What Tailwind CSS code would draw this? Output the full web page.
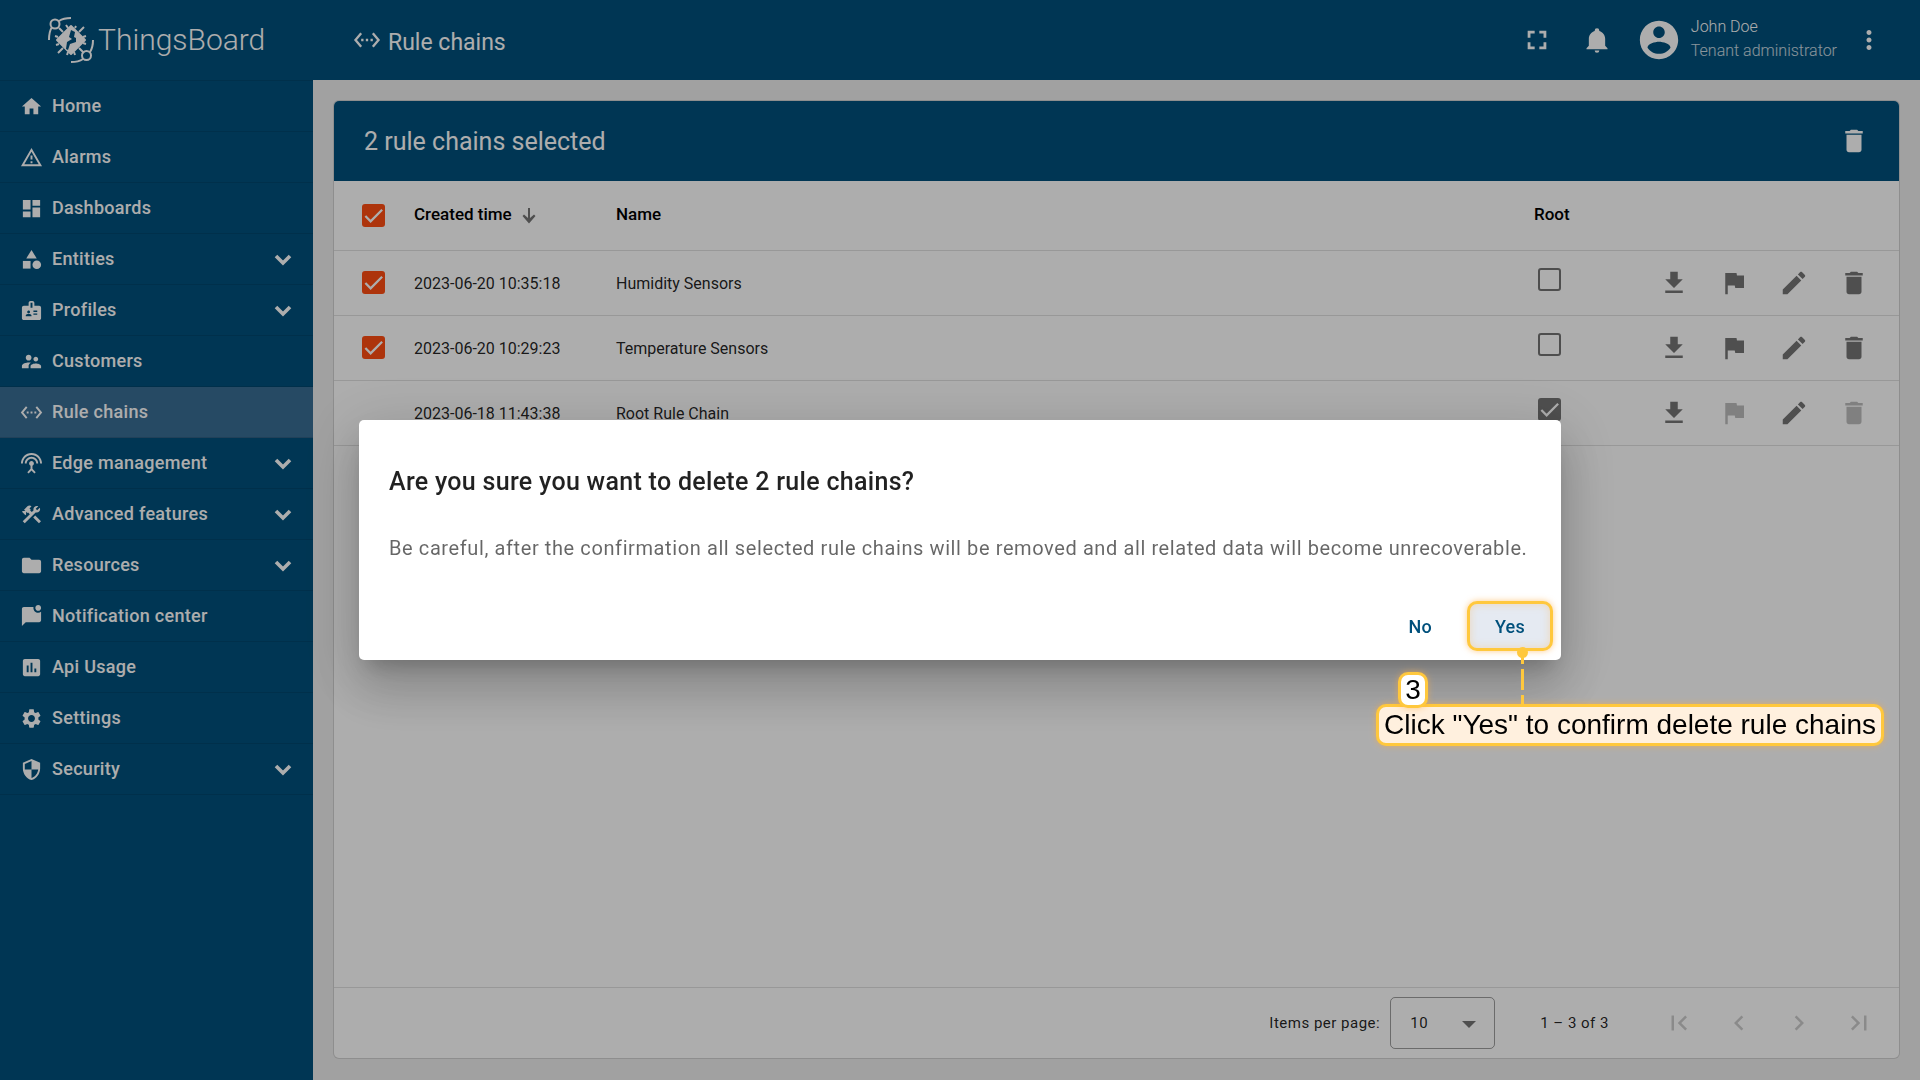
<!DOCTYPE html>
<html lang="en">
<head>
  <meta charset="UTF-8"/>
  <meta name="viewport" content="width=device-width, initial-scale=1.0"/>
  <title>Rule chains - ThingsBoard</title>
  <script src="https://cdn.jsdelivr.net/npm/@tailwindcss/browser@4"></script>
</head>
<body class="font-['Roboto',sans-serif] bg-[#eeeeee] text-black/87">

<!-- icon set -->
<svg class="hidden">
  <symbol id="home" viewBox="0 0 24 24"><path d="M10 20v-6h4v6h5v-8h3L12 3 2 12h3v8z"/></symbol>
  <symbol id="alarm" viewBox="0 0 24 24"><path d="M12 5.99L19.53 19H4.47L12 5.99M12 2L1 21h22L12 2zm1 14h-2v2h2v-2zm0-6h-2v4h2v-4z"/></symbol>
  <symbol id="dashboard" viewBox="0 0 24 24"><path d="M3 13h8V3H3v10zm0 8h8v-6H3v6zm10 0h8V11h-8v10zm0-18v6h8V3h-8z"/></symbol>
  <symbol id="category" viewBox="0 0 24 24"><path d="M12 2l-5.5 9h11z"/><circle cx="17.5" cy="17.5" r="4.5"/><path d="M3 13.5h8v8H3z"/></symbol>
  <symbol id="badge" viewBox="0 0 24 24"><path fill-rule="evenodd" d="M20 7h-5V4c0-1.100-.9-2-2-2h-2c-1.100 0-2 .9-2 2v3H4c-1.100 0-2 .9-2 2v11c0 1.100.9 2 2 2h16c1.100 0 2-.9 2-2V9c0-1.100-.9-2-2-2zM9 12c.83 0 1.500.67 1.500 1.500S9.830 15 9 15s-1.500-.67-1.500-1.500S8.170 12 9 12zm3 6H6v-.75c0-1 2-1.500 3-1.500s3 .5 3 1.500V18zm1-9h-2V4h2v5zm5 7.500h-4V15h4v1.500zm0-3h-4V12h4v1.500z"/></symbol>
  <symbol id="people" viewBox="0 0 24 24"><path d="M16.500 12c1.380 0 2.490-1.120 2.490-2.500S17.880 7 16.500 7C15.120 7 14 8.120 14 9.500s1.120 2.500 2.500 2.500zM9 11c1.660 0 2.990-1.340 2.990-3S10.660 5 9 5C7.340 5 6 6.340 6 8s1.340 3 3 3zm7.500 3c-1.830 0-5.500.92-5.500 2.750V19h11v-2.250c0-1.830-3.670-2.750-5.500-2.750zM9 13c-2.330 0-7 1.170-7 3.500V19h7v-2.250c0-.85.33-2.340 2.370-3.470C10.500 13.100 9.660 13 9 13z"/></symbol>
  <symbol id="ethernet" viewBox="0 0 24 24"><path d="M7.770 6.760L6.230 5.480.82 12l5.410 6.520 1.540-1.280L3.420 12l4.350-5.240zM7 13h2v-2H7v2zm10-2h-2v2h2v-2zm-6 2h2v-2h-2v2zm6.770-7.520l-1.540 1.280L20.580 12l-4.350 5.240 1.540 1.280L23.180 12l-5.410-6.520z"/></symbol>
  <symbol id="antenna" viewBox="0 0 24 24"><path d="M12 5c-3.870 0-7 3.130-7 7h2c0-2.760 2.240-5 5-5s5 2.240 5 5h2c0-3.870-3.130-7-7-7zm1 9.290c.88-.39 1.500-1.260 1.500-2.290 0-1.380-1.120-2.500-2.500-2.500S9.500 10.620 9.500 12c0 1.020.62 1.900 1.500 2.290v3.300L7.590 21 9 22.410l3-3 3 3L16.410 21 13 17.590v-3.300zM12 1C5.930 1 1 5.930 1 12h2c0-4.970 4.030-9 9-9s9 4.030 9 9h2c0-6.070-4.930-11-11-11z"/></symbol>
  <symbol id="tools" viewBox="0 0 24 24"><path d="M13.783 15.172l2.121-2.121 5.996 5.996-2.121 2.121zM17.500 10c1.930 0 3.500-1.570 3.500-3.500 0-.58-.16-1.120-.41-1.600l-2.700 2.700-1.490-1.490 2.700-2.700c-.48-.25-1.020-.41-1.600-.41C15.570 3 14 4.570 14 6.500c0 .41.08.8.21 1.160l-1.850 1.850-1.780-1.780.71-.71-1.410-1.410L12 3.490c-1.170-1.170-3.070-1.170-4.240 0L4.220 7.030l1.410 1.410H2.810l-.71.71 3.540 3.540.71-.71V9.150l1.410 1.410.71-.71 1.780 1.780-7.410 7.410 2.120 2.120L16.340 9.790c.36.13.75.21 1.160.21z"/></symbol>
  <symbol id="folder" viewBox="0 0 24 24"><path d="M10 4H4c-1.100 0-1.990.9-1.990 2L2 18c0 1.100.9 2 2 2h16c1.100 0 2-.9 2-2V8c0-1.100-.9-2-2-2h-8l-2-2z"/></symbol>
  <symbol id="unread" viewBox="0 0 24 24"><path d="M22 6.980V16c0 1.100-.9 2-2 2H6l-4 4V4c0-1.100.9-2 2-2h10.100c-.06.32-.1.660-.1 1 0 2.760 2.240 5 5 5 1.130 0 2.160-.39 3-1.020zM16 3c0 1.660 1.340 3 3 3s3-1.340 3-3-1.340-3-3-3-3 1.340-3 3z"/></symbol>
  <symbol id="chart" viewBox="0 0 24 24"><path d="M19 3H5c-1.100 0-2 .9-2 2v14c0 1.100.9 2 2 2h14c1.100 0 2-.9 2-2V5c0-1.100-.9-2-2-2zM9 17H7v-7h2v7zm4 0h-2V7h2v10zm4 0h-2v-4h2v4z"/></symbol>
  <symbol id="gear" viewBox="0 0 24 24"><path d="M19.140 12.940c.04-.3.060-.61.060-.94 0-.32-.02-.64-.07-.94l2.030-1.580c.18-.14.230-.41.120-.61l-1.920-3.320c-.12-.22-.37-.29-.59-.22l-2.390.96c-.5-.38-1.030-.7-1.620-.94l-.36-2.540c-.04-.24-.24-.41-.48-.41h-3.840c-.24 0-.43.17-.47.41l-.36 2.540c-.59.24-1.130.57-1.620.94l-2.390-.96c-.22-.08-.47 0-.59.22L2.740 8.870c-.12.21-.08.47.12.61l2.030 1.580c-.05.3-.09.63-.09.94s.02.640.07.94l-2.030 1.580c-.18.14-.23.41-.12.61l1.920 3.320c.12.22.37.29.59.22l2.390-.96c.5.38 1.030.7 1.620.94l.36 2.540c.05.24.24.41.48.41h3.840c.24 0 .44-.17.470-.41l.36-2.540c.59-.24 1.130-.56 1.620-.94l2.390.96c.22.08.47 0 .59-.22l1.920-3.320c.12-.22.070-.47-.12-.61l-2.010-1.580zM12 15.600c-1.980 0-3.600-1.620-3.600-3.600s1.620-3.600 3.600-3.600 3.600 1.620 3.600 3.600-1.620 3.600-3.600 3.600z"/></symbol>
  <symbol id="shield" viewBox="0 0 24 24"><path d="M12 1L3 5v6c0 5.550 3.840 10.740 9 12 5.160-1.260 9-6.450 9-12V5l-9-4zm0 10.990h7c-.53 4.120-3.280 7.790-7 8.940V12H5V6.300l7-3.110v8.800z"/></symbol>
  <symbol id="chevron" viewBox="0 0 24 24"><path d="M5 9l7 7 7-7" fill="none" stroke="currentColor" stroke-width="3.600"/></symbol>
  <symbol id="fullscreen" viewBox="0 0 24 24"><path d="M4 4h6v2.400H6.400V10H4V4m10 0h6v6h-2.400V6.400H14V4m3.600 10H20v6h-6v-2.400h3.600V14M10 17.600V20H4v-6h2.400v3.600H10z"/></symbol>
  <symbol id="bell" viewBox="0 0 24 24"><path d="M21 19v1H3v-1l2-2v-6c0-3.100 2.030-5.830 5-6.710V4a2 2 0 0 1 4 0v.29c2.970.88 5 3.610 5 6.710v6l2 2m-7 2a2 2 0 0 1-4 0"/></symbol>
  <symbol id="account" viewBox="0 0 24 24"><path d="M12 2C6.480 2 2 6.480 2 12s4.480 10 10 10 10-4.480 10-10S17.520 2 12 2zm0 3c1.660 0 3 1.340 3 3s-1.340 3-3 3-3-1.340-3-3 1.340-3 3-3zm0 14.200c-2.500 0-4.710-1.280-6-3.220.03-1.990 4-3.080 6-3.080 1.990 0 5.970 1.090 6 3.080-1.290 1.940-3.500 3.220-6 3.220z"/></symbol>
  <symbol id="more" viewBox="0 0 24 24"><path d="M12 8c1.100 0 2-.9 2-2s-.9-2-2-2-2 .9-2 2 .9 2 2 2zm0 2c-1.100 0-2 .9-2 2s.9 2 2 2 2-.9 2-2-.9-2-2-2zm0 6c-1.100 0-2 .9-2 2s.9 2 2 2 2-.9 2-2-.9-2-2-2z"/></symbol>
  <symbol id="trash" viewBox="0 0 24 24"><path d="M6 19c0 1.100.9 2 2 2h8c1.100 0 2-.9 2-2V7H6v12zM19 4h-3.500l-1-1h-5l-1 1H5v2h14V4z"/></symbol>
  <symbol id="download" viewBox="0 0 24 24"><path d="M19 9h-4V3H9v6H5l7 7 7-7zM5 18v2h14v-2H5z"/></symbol>
  <symbol id="flag" viewBox="0 0 24 24"><path d="M14.400 6L14 4H5v17h2v-7h5.600l.4 2h7V6z"/></symbol>
  <symbol id="edit" viewBox="0 0 24 24"><path d="M3 17.250V21h3.750L17.810 9.940l-3.750-3.750L3 17.250zM20.710 7.040c.39-.39.39-1.020 0-1.410l-2.340-2.340c-.39-.39-1.020-.39-1.410 0l-1.830 1.830 3.750 3.750 1.830-1.830z"/></symbol>
  <symbol id="arrow" viewBox="0 0 14 16"><path d="M6 0h2v10l4-3.500L13.500 8 7 15.500.5 8 2 6.500 6 10z"/></symbol>
  <symbol id="first" viewBox="0 0 24 24"><path d="M18.410 16.590L13.820 12l4.590-4.590L17 6l-6 6 6 6zM6 6h2v12H6z"/></symbol>
  <symbol id="prev" viewBox="0 0 24 24"><path d="M15.410 7.410L14 6l-6 6 6 6 1.410-1.410L10.830 12z"/></symbol>
  <symbol id="next" viewBox="0 0 24 24"><path d="M10 6L8.590 7.410 13.170 12l-4.580 4.590L10 18l6-6z"/></symbol>
  <symbol id="last" viewBox="0 0 24 24"><path d="M5.590 7.410L10.180 12l-4.590 4.590L7 18l6-6-6-6zM16 6h2v12h-2z"/></symbol>
  <symbol id="check" viewBox="0 0 24 24"><path d="M3.500 12.500l5.500 5.500L21 6" fill="none" stroke="currentColor" stroke-width="2.400"/></symbol>
</svg>

<div class="flex min-h-screen">

  <aside class="w-[313px] shrink-0 bg-[#00507c] text-white">
    <div class="flex h-20 items-center gap-1 pl-12">
      <svg class="size-[46px]" viewBox="0 0 46 46" fill="none" stroke="currentColor" stroke-width="2">
        <circle cx="7" cy="7" r="4.500"/>
        <path d="M11 4c3-2 7-3 12-3M4 10c-2 3-3 7-3 13"/>
        <circle cx="38.500" cy="38.500" r="4.500"/>
        <path d="M35 42c-3 2-7 3-12 3M42 35c2-3 3-7 3-12"/>
        <path d="M15 15l-4-4M20 11l-2-3M27 11l1-2M10 20l-3-1M11 27l-3 1M31 15l5-5M35 20l3-1M35 26l3 1M31 31l5 5M26 35l1 3M20 35l-1 3M15 31l-5 5"/>
        <path d="M23 9l14 14-14 14L9 23z" fill="currentColor" stroke-linejoin="round"/>
        <path class="text-[#00507c]" d="M23 13l4 2-1 5 2 1v4l-6 2-2 6-2-1 1-7 5-3-3-2z" fill="currentColor" stroke="none"/>
      </svg>
      <span class="text-[30px] leading-9 font-light">ThingsBoard</span>
    </div>
    <nav id="menu" class="border-t border-black/10 text-[18px] leading-6 font-medium tracking-[0.3px]"></nav>
  </aside>

  <div class="flex min-w-0 grow flex-col">
    <header class="flex h-20 items-center bg-[#00507c] pr-9 pl-10 text-white">
      <svg class="size-7 fill-current"><use href="#ethernet"/></svg>
      <h1 class="grow pt-[6px] pl-[7px] text-[23px] leading-7">Rule chains</h1>
      <button aria-label="Fullscreen" class="mr-8"><svg class="size-7 fill-current"><use href="#fullscreen"/></svg></button>
      <button aria-label="Notifications" class="mr-[25px]"><svg class="size-7 fill-current"><use href="#bell"/></svg></button>
      <svg class="mr-[9px] size-[46px] fill-current"><use href="#account"/></svg>
      <div class="mr-[17px] pb-[2px] text-[16px] leading-6 font-light">
        <p>John Doe</p>
        <p class="text-white/80">Tenant administrator</p>
      </div>
      <button aria-label="More"><svg class="size-[30px] fill-current"><use href="#more"/></svg></button>
    </header>

    <main class="flex grow px-[21px] pt-[21px] pb-[22px]">
      <section class="flex grow flex-col overflow-hidden rounded-[5px] bg-white shadow-[0_0_0_1px_rgba(0,0,0,0.12)]">
        <div class="flex h-20 items-center justify-between bg-[#00507c] px-[30px] text-white">
          <h2 class="pt-[2px] text-[25px] leading-8">2 rule chains selected</h2>
          <button aria-label="Delete selected"><svg class="size-[30px] fill-current"><use href="#trash"/></svg></button>
        </div>

        <table class="w-full table-fixed text-left text-[16px] leading-5">
          <thead>
            <tr class="h-[69px] border-b border-black/12 text-[17px] text-black">
              <th class="w-20 pl-7"><label class="grid size-[23px] place-items-center rounded-[3px] bg-[#ff4d12] text-white"><input type="checkbox" checked aria-label="Select all" class="col-start-1 row-start-1 size-full appearance-none"/><svg class="col-start-1 row-start-1 size-[23px]"><use href="#check"/></svg></label></th>
              <th class="w-[202px] pb-[2px] font-medium"><span class="flex items-center gap-[10px]">Created time <svg class="mt-1 h-4 w-[14px] fill-black/54"><use href="#arrow"/></svg></span></th>
              <th class="pb-[2px] font-medium">Name</th>
              <th class="w-[113px] pb-[2px] font-medium">Root</th>
              <th class="w-[252px]"></th>
            </tr>
          </thead>
          <tbody id="rows"></tbody>
        </table>

        <footer class="mt-auto flex h-[71px] items-center justify-end border-t border-black/12 pr-[25px] text-[15px] leading-5 tracking-[0.5px]">
          <label for="pageSize" class="mr-[10px]">Items per page:</label>
          <div class="relative mr-[45px]">
            <select id="pageSize" class="h-[52px] w-[105px] appearance-none rounded-[5px] border border-black/38 pl-[19px]">
              <option>10</option>
            </select>
            <span class="pointer-events-none absolute top-6 right-[19px] border-x-[7px] border-t-[7px] border-x-transparent border-t-black/54"></span>
          </div>
          <span class="mr-[55px]">1 – 3 of 3</span>
          <div class="flex gap-[30px] text-black/20">
            <button aria-label="First page" disabled><svg class="size-[30px] fill-current"><use href="#first"/></svg></button>
            <button aria-label="Previous page" disabled><svg class="size-[30px] fill-current"><use href="#prev"/></svg></button>
            <button aria-label="Next page" disabled><svg class="size-[30px] fill-current"><use href="#next"/></svg></button>
            <button aria-label="Last page" disabled><svg class="size-[30px] fill-current"><use href="#last"/></svg></button>
          </div>
        </footer>
      </section>
    </main>
  </div>
</div>

<!-- confirm dialog -->
<div class="fixed inset-0 flex items-center justify-center bg-black/32">
  <div role="dialog" aria-labelledby="dlgTitle" class="relative w-[1202px] rounded-[5px] bg-white px-[30px] pt-11 pb-[9px] shadow-[0_14px_19px_-9px_rgba(0,0,0,0.2),0_30px_48px_4px_rgba(0,0,0,0.14),0_11px_58px_10px_rgba(0,0,0,0.12)]">
    <h2 id="dlgTitle" class="text-[25px] leading-9 font-medium tracking-[0.3px]">Are you sure you want to delete 2 rule chains?</h2>
    <p class="mt-[31px] text-[20px] leading-[34px] tracking-[0.6px] whitespace-nowrap text-black/60">Be careful, after the confirmation all selected rule chains will be removed and all related data will become unrecoverable.</p>
    <div class="-mr-[22px] mt-9 flex items-center justify-end gap-[27px] text-[18px] font-medium tracking-[0.3px] text-[#00507c]">
      <button class="px-2">No</button>
      <button class="h-[50px] w-[86px] rounded-[10px] border-3 border-[#ffc83d] bg-[#e5eaf2] shadow-[0_0_6px_rgba(255,170,60,0.6),inset_0_0_8px_rgba(255,180,80,0.35)]">Yes</button>
    </div>

    <!-- tutorial callout -->
    <div class="absolute top-[227px] left-[1017px]">
      <span class="absolute top-0 left-[141px] size-[11px] rounded-full bg-[#ffc83d]"></span>
      <svg class="absolute top-1 left-[145px] h-14 w-[3px]" viewBox="0 0 3 56"><path d="M1.500 0v56" stroke="#ffc83d" stroke-width="3" stroke-dasharray="21 5" stroke-dashoffset="8"/></svg>
      <div class="pt-[57px]">
        <p class="rounded-[10px] border-3 border-[#ffc83d] bg-[#fff0de] px-[5px] font-['Liberation_Sans',sans-serif] text-[28px] leading-9 whitespace-nowrap text-black shadow-[0_0_6px_rgba(255,170,60,0.6)]">Click "Yes" to confirm delete rule chains</p>
      </div>
      <span class="absolute top-[25px] left-[22px] grid h-9 w-[30px] place-items-center rounded-[10px] border-3 border-[#ffc83d] bg-white font-['Liberation_Sans',sans-serif] text-[28px] leading-7 text-black shadow-[0_0_6px_rgba(255,170,60,0.6)]">3</span>
    </div>
  </div>
</div>

<script>
  const menu = [
    ["home", "Home"],
    ["alarm", "Alarms"],
    ["dashboard", "Dashboards"],
    ["category", "Entities", true],
    ["badge", "Profiles", true],
    ["people", "Customers"],
    ["ethernet", "Rule chains"],
    ["antenna", "Edge management", true],
    ["tools", "Advanced features", true],
    ["folder", "Resources", true],
    ["unread", "Notification center"],
    ["chart", "Api Usage"],
    ["gear", "Settings"],
    ["shield", "Security", true],
  ];
  document.getElementById("menu").innerHTML = menu.map(([icon, label, open]) => `
    <a href="#" class="flex h-[51px] items-center border-b border-black/10 pr-[18px] pl-5 ${label === "Rule chains" ? "bg-[#386d94]" : ""}">
      <svg class="mr-[9px] size-[23px] fill-current"><use href="#${icon}"/></svg>
      <span class="grow">${label}</span>
      ${open ? `<svg class="size-6"><use href="#chevron"/></svg>` : ""}
    </a>`).join("");

  const chains = [
    { time: "2023-06-20 10:35:18", name: "Humidity Sensors", root: false },
    { time: "2023-06-20 10:29:23", name: "Temperature Sensors", root: false },
    { time: "2023-06-18 11:43:38", name: "Root Rule Chain", root: true },
  ];
  const action = (icon, label, off) => `<button aria-label="${label}" ${off ? "disabled" : ""} class="${off ? "text-black/26" : "text-black/54"}"><svg class="size-[30px] fill-current"><use href="#${icon}"/></svg></button>`;
  document.getElementById("rows").innerHTML = chains.map(c => `
    <tr class="h-[65px] border-b border-black/12">
      <td class="pl-7">${c.root ? "" : `<label class="grid size-[23px] place-items-center rounded-[3px] bg-[#ff4d12] text-white"><input type="checkbox" checked aria-label="Select ${c.name}" class="col-start-1 row-start-1 size-full appearance-none"/><svg class="col-start-1 row-start-1 size-[23px]"><use href="#check"/></svg></label>`}</td>
      <td class="pt-[2px]">${c.time}</td>
      <td class="pt-[2px]">${c.name}</td>
      <td class="pb-[6px] pl-1">
        <label class="grid size-[23px] place-items-center rounded-[3px] text-white ${c.root ? "bg-[#747474]" : "border-2 border-[#747474]"}">
          <input type="checkbox" ${c.root ? "checked" : ""} disabled aria-label="Root" class="col-start-1 row-start-1 size-full appearance-none"/>
          ${c.root ? `<svg class="col-start-1 row-start-1 size-[23px]"><use href="#check"/></svg>` : ""}
        </label>
      </td>
      <td>
        <div class="flex justify-end gap-[30px] pr-[30px]">
          ${action("download", "Export")}
          ${action("flag", "Make root", c.root)}
          ${action("edit", "Edit")}
          ${action("trash", "Delete", c.root)}
        </div>
      </td>
    </tr>`).join("");
</script>

</body>
</html>
